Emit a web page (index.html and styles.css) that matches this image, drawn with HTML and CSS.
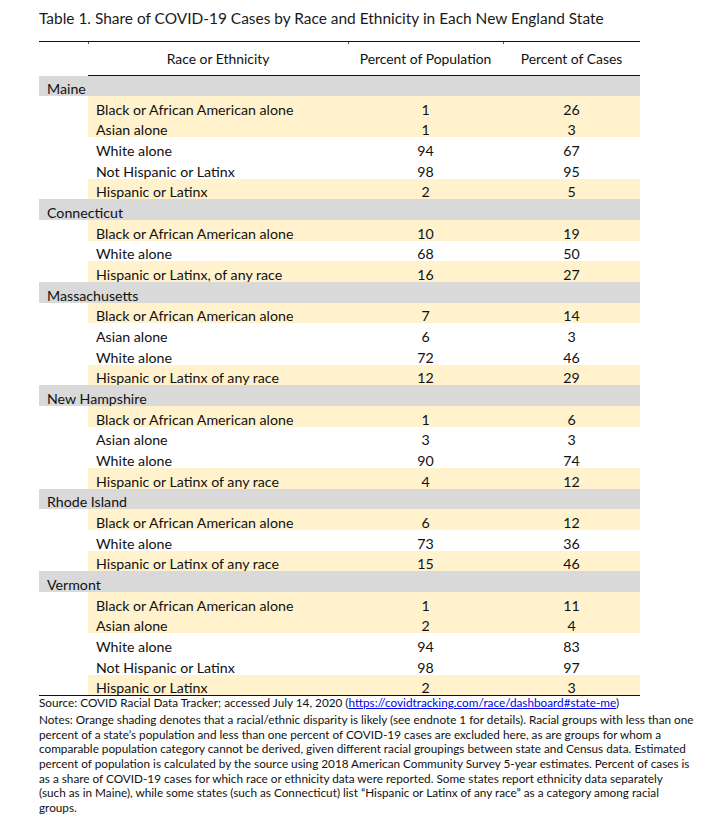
FILE: index.html
```html
<!DOCTYPE html>
<html lang="en">
<head>
<meta charset="utf-8">
<title>Table 1</title>
<link rel="stylesheet" href="styles.css">
</head>
<body>
<div class="page">
  <h1 class="title">Table 1. Share of COVID-19 Cases by Race and Ethnicity in Each New England State</h1>
  <table class="data">
    <colgroup>
      <col class="c-state"><col class="c-race"><col class="c-pop"><col class="c-cases">
    </colgroup>
    <thead>
      <tr class="head">
        <th></th>
        <th class="tick">Race or Ethnicity</th>
        <th class="tick">Percent of Population</th>
        <th class="tick">Percent of Cases</th>
      </tr>
    </thead>
    <tbody>
      <tr class="state"><td colspan="4">Maine</td></tr>
      <tr class="hl"><td class="blank"></td><td class="race">Black or African American alone</td><td class="num">1</td><td class="num">26</td></tr>
      <tr class="hl"><td class="blank"></td><td class="race">Asian alone</td><td class="num">1</td><td class="num">3</td></tr>
      <tr><td class="blank"></td><td class="race">White alone</td><td class="num">94</td><td class="num">67</td></tr>
      <tr><td class="blank"></td><td class="race">Not Hispanic or Latinx</td><td class="num">98</td><td class="num">95</td></tr>
      <tr class="hl"><td class="blank"></td><td class="race">Hispanic or Latinx</td><td class="num">2</td><td class="num">5</td></tr>

      <tr class="state"><td colspan="4">Connecticut</td></tr>
      <tr class="hl"><td class="blank"></td><td class="race">Black or African American alone</td><td class="num">10</td><td class="num">19</td></tr>
      <tr><td class="blank"></td><td class="race">White alone</td><td class="num">68</td><td class="num">50</td></tr>
      <tr class="hl"><td class="blank"></td><td class="race">Hispanic or Latinx, of any race</td><td class="num">16</td><td class="num">27</td></tr>

      <tr class="state"><td colspan="4">Massachusetts</td></tr>
      <tr class="hl"><td class="blank"></td><td class="race">Black or African American alone</td><td class="num">7</td><td class="num">14</td></tr>
      <tr><td class="blank"></td><td class="race">Asian alone</td><td class="num">6</td><td class="num">3</td></tr>
      <tr><td class="blank"></td><td class="race">White alone</td><td class="num">72</td><td class="num">46</td></tr>
      <tr class="hl"><td class="blank"></td><td class="race">Hispanic or Latinx of any race</td><td class="num">12</td><td class="num">29</td></tr>

      <tr class="state"><td colspan="4">New Hampshire</td></tr>
      <tr class="hl"><td class="blank"></td><td class="race">Black or African American alone</td><td class="num">1</td><td class="num">6</td></tr>
      <tr><td class="blank"></td><td class="race">Asian alone</td><td class="num">3</td><td class="num">3</td></tr>
      <tr><td class="blank"></td><td class="race">White alone</td><td class="num">90</td><td class="num">74</td></tr>
      <tr class="hl"><td class="blank"></td><td class="race">Hispanic or Latinx of any race</td><td class="num">4</td><td class="num">12</td></tr>

      <tr class="state"><td colspan="4">Rhode Island</td></tr>
      <tr class="hl"><td class="blank"></td><td class="race">Black or African American alone</td><td class="num">6</td><td class="num">12</td></tr>
      <tr><td class="blank"></td><td class="race">White alone</td><td class="num">73</td><td class="num">36</td></tr>
      <tr class="hl"><td class="blank"></td><td class="race">Hispanic or Latinx of any race</td><td class="num">15</td><td class="num">46</td></tr>

      <tr class="state"><td colspan="4">Vermont</td></tr>
      <tr class="hl"><td class="blank"></td><td class="race">Black or African American alone</td><td class="num">1</td><td class="num">11</td></tr>
      <tr class="hl"><td class="blank"></td><td class="race">Asian alone</td><td class="num">2</td><td class="num">4</td></tr>
      <tr><td class="blank"></td><td class="race">White alone</td><td class="num">94</td><td class="num">83</td></tr>
      <tr><td class="blank"></td><td class="race">Not Hispanic or Latinx</td><td class="num">98</td><td class="num">97</td></tr>
      <tr class="hl last"><td class="blank"></td><td class="race">Hispanic or Latinx</td><td class="num">2</td><td class="num">3</td></tr>
    </tbody>
  </table>
  <div class="notes">
    <p class="source">Source: COVID Racial Data Tracker; accessed July 14, 2020 (<a href="#">https://covidtracking.com/race/dashboard#state-me</a>)</p>
    <p class="note">Notes: Orange shading denotes that a racial/ethnic disparity is likely (see endnote 1 for details). Racial groups with less than one<br>percent of a state’s population and less than one percent of COVID-19 cases are excluded here, as are groups for whom a<br>comparable population category cannot be derived, given different racial groupings between state and Census data. Estimated<br>percent of population is calculated by the source using 2018 American Community Survey 5-year estimates. Percent of cases is<br>as a share of COVID-19 cases for which race or ethnicity data were reported. Some states report ethnicity data separately<br>(such as in Maine), while some states (such as Connecticut) list “Hispanic or Latinx of any race” as a category among racial<br>groups.</p>
  </div>
</div>
</body>
</html>
```

FILE: styles.css
```css
html, body {
  margin: 0;
  padding: 0;
  background: #ffffff;
}

body {
  font-family: Lato, "Open Sans", sans-serif;
  color: #111111;
}

.page {
  padding: 9px 0 0 39px;
}

.title {
  margin: 0;
  font-size: 15.45px;
  font-weight: normal;
  line-height: 18px;
  color: #1a1a1a;
}

.data {
  margin-top: 14px;
  border-collapse: collapse;
  table-layout: fixed;
  width: 601px;
  font-size: 14.2px;
}

.c-state { width: 49px; }
.c-race { width: 260px; }
.c-pop { width: 155px; }
.c-cases { width: 137px; }

.data th,
.data td {
  padding: 0;
  vertical-align: bottom;
  line-height: 15px;
}

.head th {
  height: 33px;
  font-size: 13.9px;
  font-weight: normal;
  line-height: 17px;
  text-align: center;
  vertical-align: middle;
  border-top: 1.3px solid #111;
  border-bottom: 1.3px solid #111;
  position: relative;
}

.head th:first-child {
  border-bottom: none;
}

.tick::before {
  content: "";
  position: absolute;
  left: 0;
  top: 0;
  width: 1px;
  height: 2px;
  background: #555;
}

.tick:first-of-type::before {
  display: none;
}

.data tbody tr {
  height: 20.67px;
}

.state td {
  background: #d9d9d9;
  padding-left: 8px;
}

.hl td {
  background: #fff2cc;
}

.hl td.blank {
  background: #ffffff;
}

.data td.race {
  padding-left: 8px;
}

.num {
  text-align: center;
}

.last td {
  border-bottom: 1.3px solid #111;
}

.notes {
  width: 660px;
  font-size: 11.75px;
  line-height: 14.6px;
  white-space: nowrap;
}

.notes p {
  margin: 0;
}

.notes .source {
  margin-bottom: 3px;
}

.notes a {
  color: #0000ee;
  text-decoration: underline;
}
```
